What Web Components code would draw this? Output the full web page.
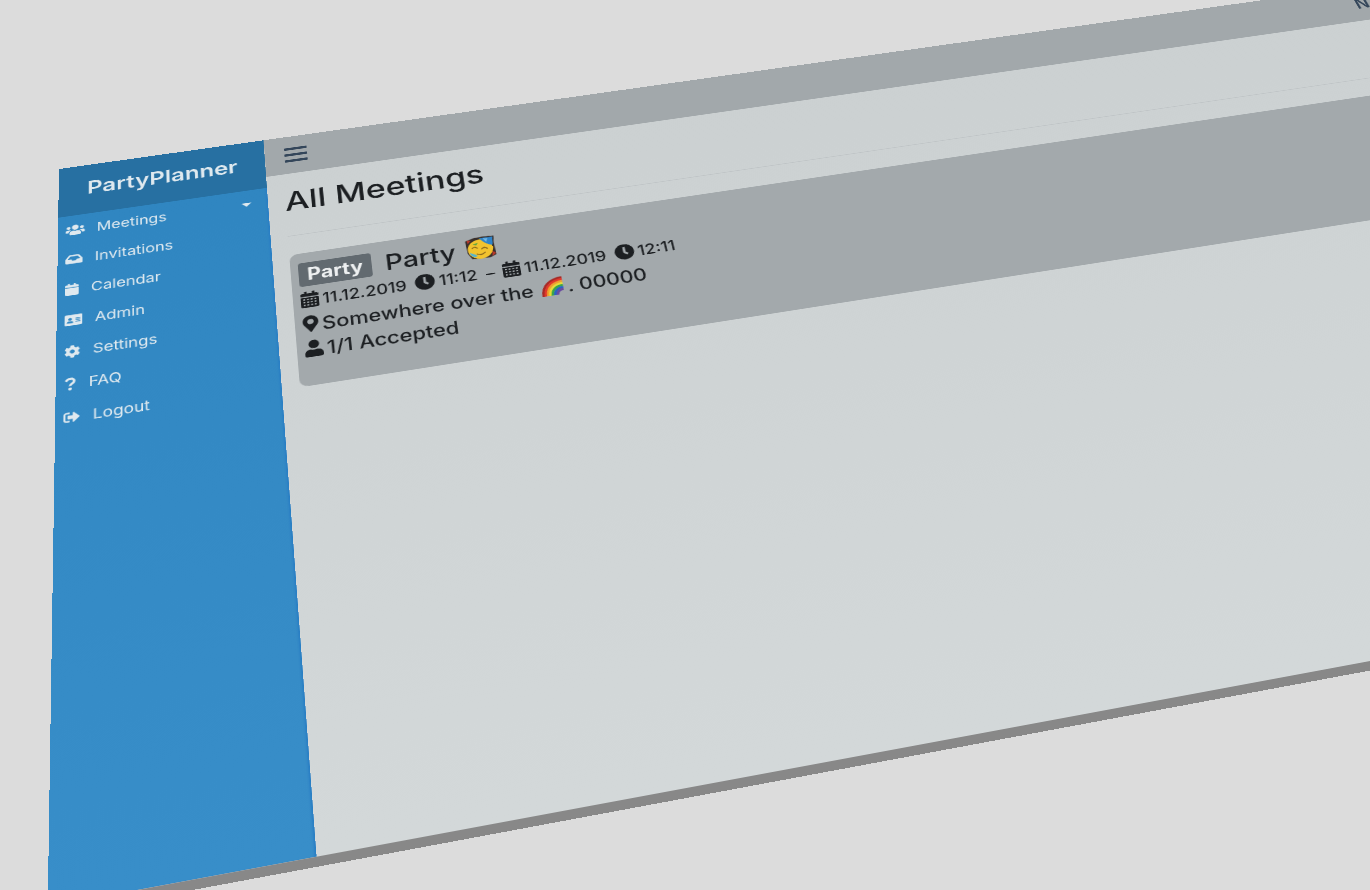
<!DOCTYPE html>
<html lang="en">
<head>
<meta charset="utf-8">
<title>PartyPlanner</title>
<style>
  html, body { margin: 0; height: 100%; overflow: hidden; background: #dcdcdc; }
  body { font-family: Inter, "Liberation Sans", sans-serif; color: #212529; }
</style>
</head>
<body>
<party-stage>
  <party-screen>
    <party-sidebar slot="sidebar">
      <nav-item icon="users" caret>Meetings</nav-item>
      <nav-item icon="inbox">Invitations</nav-item>
      <nav-item icon="calendar">Calendar</nav-item>
      <nav-item icon="card">Admin</nav-item>
      <nav-item icon="cog">Settings</nav-item>
      <nav-item icon="question">FAQ</nav-item>
      <nav-item icon="logout">Logout</nav-item>
    </party-sidebar>
    <party-topbar slot="topbar">N</party-topbar>
    <meeting-list heading="All Meetings">
      <meeting-card kind="Party"></meeting-card>
    </meeting-list>
  </party-screen>
</party-stage>

<script>
const CAL = 'M12 192h424c6.600 0 12 5.400 12 12v260c0 26.500-21.500 48-48 48H48c-26.500 0-48-21.500-48-48V204c0-6.600 5.400-12 12-12zm436-44v-36c0-26.500-21.500-48-48-48h-48V12c0-6.600-5.400-12-12-12h-40c-6.600 0-12 5.400-12 12v52H160V12c0-6.600-5.400-12-12-12h-40c-6.600 0-12 5.400-12 12v52H48C21.500 64 0 85.500 0 112v36c0 6.600 5.400 12 12 12h424c6.600 0 12-5.400 12-12z';
const cells = [64, 155, 246, 337].flatMap(x => [232, 320, 408].map(y => `M${x} ${y}h46v44h-46z`)).join('');
const p = d => `<path fill="currentColor" fill-rule="evenodd" d="${d}"/>`;
const ICONS = {
  users: [640, p('M96 224c35.300 0 64-28.700 64-64s-28.700-64-64-64-64 28.700-64 64 28.700 64 64 64zm448 0c35.300 0 64-28.700 64-64s-28.700-64-64-64-64 28.700-64 64 28.700 64 64 64zm32 32h-64c-17.600 0-33.500 7.100-45.100 18.600 40.300 22.100 68.900 62 75.100 109.400h66c17.700 0 32-14.300 32-32v-32c0-35.300-28.700-64-64-64zm-256 0c61.900 0 112-50.100 112-112S381.900 32 320 32 208 82.100 208 144s50.100 112 112 112zm76.800 32h-8.300c-20.800 10-43.900 16-68.500 16s-47.600-6-68.500-16h-8.300C179.600 288 128 339.600 128 403.200V432c0 26.500 21.500 48 48 48h288c26.500 0 48-21.500 48-48v-28.800c0-63.600-51.600-115.200-115.200-115.200zm-223.700-13.400C161.500 263.100 145.600 256 128 256H64c-35.300 0-64 28.700-64 64v32c0 17.700 14.300 32 32 32h65.900c6.300-47.400 34.900-87.300 75.200-109.400z')],
  inbox: [576, p('M567.900 243.900L462.200 85.400A48 48 0 0 0 422.300 64H153.700a48 48 0 0 0-39.900 21.400L8.100 243.900A48 48 0 0 0 0 270.500V400c0 26.500 21.500 48 48 48h480c26.500 0 48-21.500 48-48V270.500a48 48 0 0 0-8.100-26.600zM162.300 128h251.500l85.300 128H376l-32 64H232l-32-64H76.900l85.400-128z')],
  calendar: [448, p(CAL)],
  calendarGrid: [448, p(CAL + cells)],
  card: [576, p('M48 32h480c26 0 48 22 48 48v352c0 26-22 48-48 48H48c-26 0-48-22-48-48V80c0-26 22-48 48-48zM176 160a60 60 0 1 0 1 0zM72 384h208c0-52-30-84-64-84h-80c-34 0-64 32-64 84zM352 176h152v36H352zM352 244h152v36H352zM352 312h152v36H352z')],
  cog: [512, p('M487.400 315.700l-42.600-24.600c4.300-23.200 4.300-47 0-70.200l42.600-24.600c4.900-2.800 7.100-8.600 5.500-14-11.100-35.600-30-67.800-54.700-94.600-3.800-4.100-10-5.100-14.800-2.300L380.800 110c-17.900-15.400-38.500-27.300-60.800-35.100V25.800c0-5.600-3.900-10.500-9.400-11.700-36.700-8.200-74.300-7.800-109.200 0-5.500 1.200-9.400 6.100-9.400 11.700V75c-22.200 7.900-42.800 19.800-60.800 35.100L88.700 85.500c-4.900-2.800-11-1.900-14.800 2.300-24.700 26.700-43.600 58.900-54.700 94.600-1.700 5.400.6 11.200 5.500 14L67.300 221c-4.300 23.200-4.300 47 0 70.200l-42.600 24.600c-4.900 2.800-7.100 8.600-5.500 14 11.100 35.600 30 67.800 54.700 94.600 3.800 4.100 10 5.100 14.800 2.300l42.600-24.600c17.900 15.400 38.500 27.300 60.800 35.100v49.200c0 5.600 3.900 10.500 9.400 11.700 36.700 8.200 74.300 7.800 109.200 0 5.500-1.200 9.400-6.100 9.400-11.700v-49.200c22.200-7.900 42.800-19.800 60.800-35.100l42.600 24.600c4.900 2.800 11 1.900 14.800-2.300 24.700-26.700 43.600-58.900 54.700-94.600 1.500-5.500-.7-11.300-5.600-14.100zM256 336c-44.100 0-80-35.900-80-80s35.900-80 80-80 80 35.900 80 80-35.900 80-80 80z')],
  question: [384, '<path d="M62 134C94 76 138 44 200 44c74 0 124 44 124 104 0 92-128 92-128 184" fill="none" stroke="currentColor" stroke-width="86"/><circle cx="196" cy="446" r="58" fill="currentColor"/>'],
  logout: [512, p('M497 273L329 441c-15 15-41 4.500-41-17v-96H152c-13.300 0-24-10.700-24-24v-96c0-13.300 10.700-24 24-24h136V88c0-21.400 25.900-32 41-17l168 168c9.300 9.400 9.300 24.600 0 34zM192 436v-40c0-6.600-5.400-12-12-12H96c-17.700 0-32-14.300-32-32V160c0-17.700 14.300-32 32-32h84c6.600 0 12-5.400 12-12V76c0-6.600-5.400-12-12-12H96c-53 0-96 43-96 96v192c0 53 43 96 96 96h84c6.600 0 12-5.400 12-12z')],
  clock: [512, p('M256 8C119 8 8 119 8 256S119 504 256 504 504 393 504 256 393 8 256 8Zm92.500 313l-20 25a16 16 0 0 1-22.500 2.500l-67-49.700a40 40 0 0 1-15-31.300V112a16 16 0 0 1 16-16h32a16 16 0 0 1 16 16V256l58 42.500A16 16 0 0 1 348.500 321Z')],
  pin: [384, p('M172.300 501.700C27 291 0 269.400 0 192 0 86 86 0 192 0s192 86 192 192c0 77.400-27 99-172.300 309.700-9.500 13.800-29.900 13.800-39.400 0zM192 272c44.200 0 80-35.800 80-80s-35.800-80-80-80-80 35.800-80 80 35.800 80 80 80z')],
  user: [448, p('M224 256c70.700 0 128-57.300 128-128S294.700 0 224 0 96 57.300 96 128s57.300 128 128 128zm89.600 32h-16.700c-22.200 10.200-46.900 16-72.900 16s-50.600-5.800-72.900-16h-16.700C60.200 288 0 348.200 0 422.400V464c0 26.500 21.500 48 48 48h352c26.500 0 48-21.500 48-48v-41.600c0-74.200-60.200-134.400-134.400-134.400z')],
  face: [512, '<path d="M8 60L150 14 300 4 500 18 484 170 500 430 400 480 90 470 22 330Z" fill="#39302c"/><circle cx="246" cy="270" r="214" fill="#f2c32e"/><path d="M36 46l70 10-60 70zM440 340l60 60-70 60z" fill="#b5382a"/><path d="M250 30L476 34 462 210C400 210 310 140 250 30Z" fill="#2f83c8"/><path d="M310 44l50 92 30-80z" fill="#73b8e6"/><path d="M110 234q44-46 84 8M268 270q54-50 94 8M180 370q60 50 136-14" fill="none" stroke="#8a681c" stroke-width="22" stroke-linecap="round"/><path d="M128 150l90-26-34 56z" fill="#62a53d"/><path d="M54 320l90 54 40 40-50 20c-44-24-66-56-80-114z" fill="#57b4cf"/>'],
  rainbow: [512, '<g fill="none" stroke-width="60"><path d="M40 492C44 210 210 40 486 34" stroke="#a82a26"/><path d="M90 492C94 240 240 94 486 86" stroke="#e2382a"/><path d="M140 492C144 276 270 148 486 140" stroke="#f0a02c"/><path d="M190 492C192 310 300 202 486 194" stroke="#e6dc36"/><path d="M240 492C240 344 330 256 486 248" stroke="#3aa648"/><path d="M292 492C292 380 366 310 486 302" stroke="#2a62c4"/><path d="M344 492C348 420 396 364 486 356" stroke="#6a4aa0"/></g>']
};

const define = (name, render) => customElements.define(name, class extends HTMLElement {
  constructor() { super(); this.attachShadow({ mode: 'open' }); }
  connectedCallback() {
    const t = document.createElement('template');
    t.innerHTML = render(this);
    this.shadowRoot.replaceChildren(t.content.cloneNode(true));
  }
});

define('fa-icon', el => {
  const [w, body] = ICONS[el.getAttribute('name')];
  return `<style>
    :host { display: inline-flex; flex: none; }
    svg { display: block; height: var(--icon-size, 24px); width: auto; }
  </style><svg viewBox="0 0 ${w} 512" width="${w}" height="512" aria-hidden="true">${body}</svg>`;
});

/* The stage tilts the whole screen back, like a monitor seen at an angle. */
define('party-stage', () => `<style>
    :host { display: block; height: 100vh; overflow: hidden; }
    div {
      width: 126vw; height: calc(105vh + 12px);
      transform-origin: 0 0;
      transform: matrix3d(0.8316, -0.1076, 0, 0.0000512, -0.024359, 0.55293, 0, -0.00025843, 0, 0, 1, 0, 59, 169, 0, 1);
    }
  </style><div><slot></slot></div>`);

define('party-screen', () => `<style>
    :host { display: grid; grid-template: minmax(0, 1fr) 10px / 250px minmax(0, 1fr); height: 100%; }
    .page { display: flex; flex-direction: column; background: linear-gradient(#cbd0d1, #d3d8d9); }
    footer { grid-column: 1 / -1; background: #888; }
  </style>
  <slot name="sidebar"></slot>
  <div class="page"><slot name="topbar"></slot><slot></slot></div>
  <footer></footer>`);

define('party-sidebar', () => `<style>
    :host { display: flex; flex-direction: column; color: #dfe9ef;
      background: linear-gradient(#2f85c0, #388ec9); box-shadow: inset -3px 0 2px -1px #2a7fc4; }
    header { height: 80px; display: flex; align-items: center; justify-content: center; background: #2770a2; box-sizing: border-box; padding-bottom: 4px; }
    a { color: inherit; text-decoration: none; font-size: 29px; line-height: 40px; font-weight: 600; }
    nav { display: flex; flex-direction: column; }
  </style>
  <header><a href="#home">PartyPlanner</a></header>
  <nav><slot></slot></nav>`);

define('nav-item', el => `<style>
    :host { display: block; --icon-size: 18px; }
    a { display: flex; align-items: center; gap: 14px; height: 46px; padding: 0 20px 0 9px; box-sizing: border-box;
      color: inherit; text-decoration: none; font-size: 19px; line-height: 28px; font-weight: 400; }
    span { padding-top: 2px; }
    i { margin-left: auto; border: 6px solid transparent; border-top-color: currentColor; border-bottom: 0; }
  </style>
  <a href="#"><fa-icon name="${el.getAttribute('icon')}"></fa-icon><span><slot></slot></span>${el.hasAttribute('caret') ? '<i></i>' : ''}</a>`);

define('party-topbar', () => `<style>
    :host { display: flex; align-items: center; justify-content: space-between; height: 62px; padding: 0 20px 0 24px; background: #a2a8ab; }
    button { display: flex; flex-direction: column; gap: 6px; width: 28px; padding: 0; border: 0; background: none; }
    button span { height: 4px; border-radius: 1px; background: #34465a; }
    a { color: #34465a; text-decoration: none; font-size: 25px; line-height: 36px; font-weight: 600; }
  </style>
  <button aria-label="Toggle menu"><span></span><span></span><span></span></button>
  <a href="#user"><slot></slot></a>`);

define('meeting-list', el => `<style>
    :host { display: block; padding: 17px 0 0 20px; }
    h1 { margin: 0; font-size: 41px; line-height: 56px; font-weight: 500; color: #1c1f22; }
    hr { margin: 27px 0 29px; border: 0; border-top: 1px solid #bfc4c6; }
  </style>
  <h1>${el.getAttribute('heading')}</h1><hr><slot></slot>`);

define('meeting-card', el => `<style>
    :host { display: block; padding: 13px 9px 34px; border-radius: 10px; background: #a3a9ac; color: #1c1f22;
      font-size: 25px; line-height: 36px; font-weight: 500; }
    .row { display: flex; align-items: center; gap: 4px; height: 36px; white-space: nowrap; }
    .row > span, time { padding-top: 4px; }
    .head { height: 40px; gap: 16px; }
    .head > .badge { padding: 0 10px; border-radius: 4px; background: #626a70; color: #eef0f1; font-weight: 700; }
    h2 { margin: 0; display: flex; align-items: center; gap: 12px; font-size: 33px; line-height: 40px; font-weight: 500; }
    h2 fa-icon { --icon-size: 36px; }
    time { margin-right: 6px; font-size: 21px; font-weight: 500; }
    .sky { --icon-size: 28px; margin-left: 4px; }
  </style>
  <div class="row head"><span class="badge">${el.getAttribute('kind')}</span><h2>Party <fa-icon name="face"></fa-icon></h2></div>
  <div class="row"><fa-icon name="calendarGrid"></fa-icon><time>11.12.2019</time><fa-icon name="clock"></fa-icon><time>11:12</time><time>–</time><fa-icon name="calendarGrid"></fa-icon><time>11.12.2019</time><fa-icon name="clock"></fa-icon><time>12:11</time></div>
  <div class="row"><fa-icon name="pin"></fa-icon><span>Somewhere over the</span><fa-icon class="sky" name="rainbow"></fa-icon><span>. 00000</span></div>
  <div class="row"><fa-icon name="user"></fa-icon><span>1/1 Accepted</span></div>`);
</script>
</body>
</html>
